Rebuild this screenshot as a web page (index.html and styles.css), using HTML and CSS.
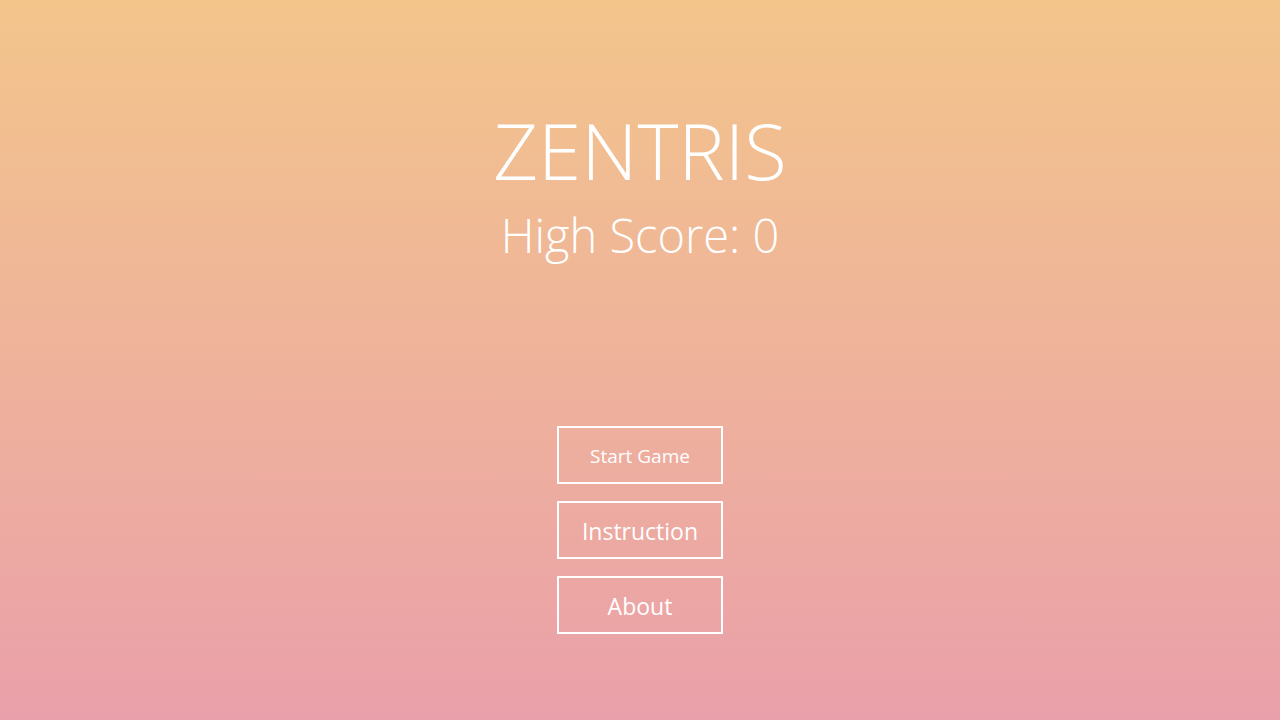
FILE: index.html
```html
<!DOCTYPE html>
<html>
<head>
<meta charset="utf-8">
<link rel="stylesheet" href="styles.css">
</head>
<body>
<main class="screen">
  <header class="titles">
    <h1 class="title">ZENTRIS</h1>
    <p class="score">High Score: 0</p>
  </header>
  <nav class="menu">
    <button class="btn btn-small">Start Game</button>
    <button class="btn">Instruction</button>
    <button class="btn">About</button>
  </nav>
</main>
</body>
</html>
```
FILE: styles.css
```css
html, body {
  margin: 0;
  padding: 0;
  width: 1280px;
  height: 720px;
  overflow: hidden;
}
body {
  background: linear-gradient(to bottom, #f3c58b 0%, #eaa0aa 100%);
  font-family: "Open Sans", "Noto Sans", sans-serif;
  color: #fff;
}
.screen {
  height: 720px;
  display: flex;
  flex-direction: column;
  align-items: center;
}
.titles {
  display: flex;
  flex-direction: column;
  align-items: center;
  padding-top: 100px;
}
.title {
  margin: 0;
  font-weight: 300;
  font-size: 78px;
  line-height: 100px;
}
.score {
  margin: 0;
  font-weight: 300;
  font-size: 47px;
  line-height: 70px;
}
.menu {
  display: flex;
  flex-direction: column;
  gap: 17px;
  margin-top: 156px;
}
.btn {
  width: 166px;
  height: 58px;
  box-sizing: border-box;
  border: 2px solid #fff;
  background: transparent;
  color: #fff;
  font-family: "Open Sans", "Noto Sans", sans-serif;
  font-size: 23px;
  font-weight: 400;
  padding: 2px 0 0;
}
.btn-small {
  font-size: 19px;
}
```
